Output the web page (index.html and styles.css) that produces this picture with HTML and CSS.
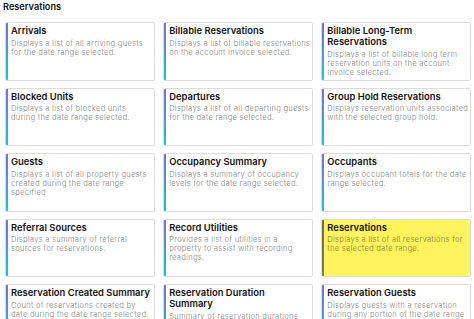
FILE: index.html
```html
<!DOCTYPE html>
<html>
    <head>
        <title>Reports - Reservations</title>
        <link rel="stylesheet" href="styles.css">
    </head>
    <body>
        <h2 class="section-title">Reservations</h2>
        <div class="report-grid">
            <div class="report-card">
                <h3>Arrivals</h3>
                <p>Displays a list of all arriving guests for the date range selected.</p>
            </div>
            <div class="report-card">
                <h3>Billable Reservations</h3>
                <p>Displays a list of billable reservations on the account invoice selected.</p>
            </div>
            <div class="report-card">
                <h3>Billable Long-Term Reservations</h3>
                <p>Displays a list of billable long term reservation units on the account invoice selected.</p>
            </div>
            <div class="report-card">
                <h3>Blocked Units</h3>
                <p>Displays a list of blocked units during the date range selected.</p>
            </div>
            <div class="report-card">
                <h3>Departures</h3>
                <p>Displays a list of all departing guests for the date range selected.</p>
            </div>
            <div class="report-card">
                <h3>Group Hold Reservations</h3>
                <p>Displays reservation units associated with the selected group hold.</p>
            </div>
            <div class="report-card">
                <h3>Guests</h3>
                <p>Displays a list of all property guests created during the date range specified</p>
            </div>
            <div class="report-card">
                <h3>Occupancy Summary</h3>
                <p>Displays a summary of occupancy levels for the date range selected.</p>
            </div>
            <div class="report-card">
                <h3>Occupants</h3>
                <p>Displays occupant totals for the date range selected.</p>
            </div>
            <div class="report-card">
                <h3>Referral Sources</h3>
                <p>Displays a summary of referral sources for reservations.</p>
            </div>
            <div class="report-card">
                <h3>Record Utilities</h3>
                <p>Provides a list of utilities in a property to assist with recording readings.</p>
            </div>
            <div class="report-card highlight">
                <h3>Reservations</h3>
                <p>Displays a list of all reservations for the selected date range.</p>
            </div>
            <div class="report-card">
                <h3>Reservation Created Summary</h3>
                <p>Count of reservations created by date during the date range selected.</p>
            </div>
            <div class="report-card">
                <h3>Reservation Duration Summary</h3>
                <p>Summary of reservation durations during the date range selected.</p>
            </div>
            <div class="report-card">
                <h3>Reservation Guests</h3>
                <p>Displays guests with a reservation during any portion of the date range selected.</p>
            </div>
        </div>
    </body>
</html>
```

FILE: styles.css
```css
body {
    margin: 0;
    background-color: #fff;
    font-family: 'Inter', 'Roboto', sans-serif;
    color: #111;
}
.section-title {
    margin: 0;
    padding: 1px 3px 0 3px;
    height: 21px;
    font-size: 9.2px;
    line-height: 12px;
    font-weight: 600;
    box-sizing: border-box;
}
.report-grid {
    display: grid;
    grid-template-columns: repeat(3, 1fr);
    grid-auto-rows: 58.5px;
    column-gap: 8.5px;
    row-gap: 7px;
    width: 466px;
    padding-left: 5px;
    padding-top: 1px;
}
.report-card {
    box-sizing: border-box;
    border: 1px solid #dcdcdc;
    border-radius: 2px;
    padding: 2px 1px 0 5px;
    background-color: #fff;
    background-image: linear-gradient(to bottom, #7a6fd6, #14c6dc);
    background-size: 2px 100%;
    background-repeat: no-repeat;
    overflow: hidden;
}
.report-card h3 {
    margin: 0 1px 0 0;
    font-size: 9.4px;
    line-height: 11px;
    letter-spacing: 0.02px;
    font-weight: 600;
    color: #111;
}
.report-card p {
    margin: 2.5px 0 0 0;
    font-size: 7.6px;
    line-height: 9px;
    letter-spacing: 0.21px;
    color: rgba(0, 0, 0, 0.42);
}
.report-card.highlight {
    background-color: #fff45c;
    background-image: linear-gradient(to bottom, #6d6b5a, #7d7b5c);
}
```
